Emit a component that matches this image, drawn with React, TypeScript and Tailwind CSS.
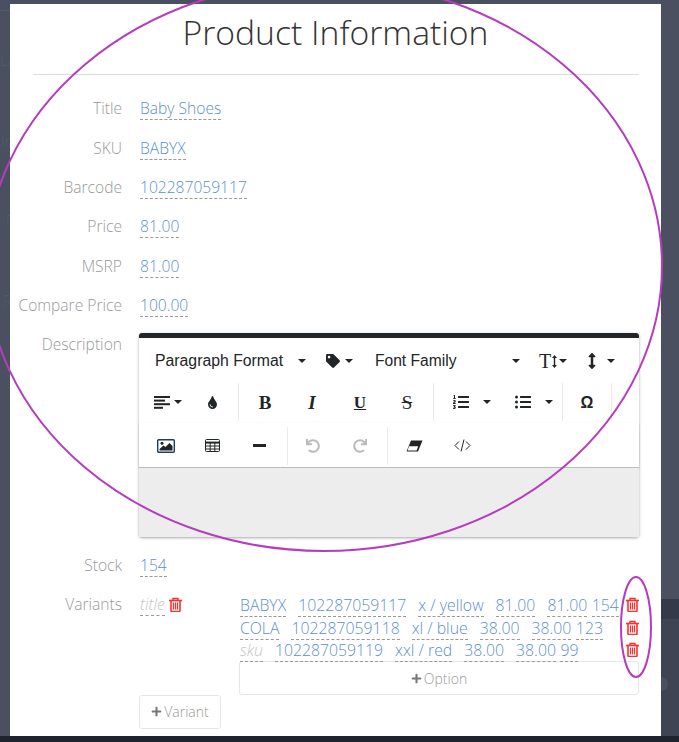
import React from "react";
import { FaTag, FaTint, FaUndo, FaRedo, FaListUl, FaListOl, FaPlus, FaArrowsAltV } from "react-icons/fa";

const sans = "font-['Open_Sans',sans-serif]";

function Caret() {
  return <span className="inline-block w-0 h-0 border-x-[4.5px] border-x-transparent border-t-[4.5px] border-t-[#222527] shrink-0" />;
}

function Editable({ children, empty }: { children: React.ReactNode; empty?: boolean }) {
  return (
    <span className={`border-b border-dashed border-[#999] leading-[21px] inline-block h-[22px] whitespace-nowrap ${empty ? "italic text-[#c4c4c4]" : "text-[#5b90d0]"}`}>
      {children}
    </span>
  );
}

function Row({ label, children, h = "h-[39.3px]" }: { label: string; children: React.ReactNode; h?: string }) {
  return (
    <div className={`flex ${h}`}>
      <div className="w-[112px] shrink-0 text-right text-[#999] leading-[21px] whitespace-nowrap">{label}</div>
      <div className="ml-[18px] leading-[21px]">{children}</div>
    </div>
  );
}

function Trash() {
  return (
    <svg width="13" height="15" viewBox="0 0 13 15" className="shrink-0 block" fill="none" stroke="#ff2d2d">
      <path d="M4 3V1.5h5V3" strokeWidth="1.4" />
      <path d="M0 3.5h13" strokeWidth="1.6" />
      <path d="M2 4v9.5a1 1 0 0 0 1 1h7a1 1 0 0 0 1-1V4" strokeWidth="1.6" />
      <path d="M4.5 5.5v7M6.5 5.5v7M8.5 5.5v7" strokeWidth="1.2" />
    </svg>
  );
}

function Tool({ children, w }: { children: React.ReactNode; w: string }) {
  return <div className={`${w} h-[38px] flex items-center justify-center text-[#222527] shrink-0`}>{children}</div>;
}

function Sep({ className = "" }: { className?: string }) {
  return <div className={`w-px h-[38px] bg-[#ebebeb] shrink-0 ${className}`} />;
}

function VariantRow({ cells }: { cells: (string | [string, boolean])[] }) {
  return (
    <div className="flex items-start h-[22.4px] text-[15.8px]">
      {cells.map((c, i) => {
        const text = Array.isArray(c) ? c[0] : c;
        const empty = Array.isArray(c) ? c[1] : false;
        return (
          <span key={i} className={i === 0 ? "" : i === cells.length - 1 ? "ml-[4.5px]" : "ml-[12px]"}>
            <Editable empty={empty}>{text}</Editable>
          </span>
        );
      })}
    </div>
  );
}

export default function App() {
  return (
    <div className={`relative w-[679px] h-[742px] overflow-hidden bg-[#4b5060] ${sans} font-light text-[15.6px]`}>
      <div className="absolute left-[661px] top-[599px] w-[18px] h-[20px] bg-[#343a4a]" />
      <div className="absolute left-[661px] top-[619px] w-[18px] h-[117px] bg-[#3f4454]" />
      <div className="absolute left-[661px] top-[677px] w-[7px] h-[14px] rounded-r-full bg-[#4b5060]" />
      <div className="absolute left-0 top-[736px] w-full h-[6px] bg-[#1f232d]" />
      <div className="absolute left-0 top-[10px] w-[10px] h-px bg-[#555a69]" />
      <div className="absolute left-0 top-[48px] text-[#555a69] text-[15px] leading-[24px]">La</div>
      <div className="absolute left-[1px] top-[128px] text-[#555a69] text-[15px] leading-[24px]">In</div>
      <div className="absolute left-[6px] top-[208px] text-[#555a69] text-[15px] leading-[24px]">P</div>
      <div className="absolute left-[3px] top-[288px] text-[#555a69] text-[15px] leading-[24px]">R</div>

      <div className="relative ml-[10px] mt-[4px] pt-[4px] w-[651px] h-[732px] bg-white">
        <h1 className="text-center text-[33.7px] leading-[50px] mt-[-1px] text-[#333]">Product Information</h1>
        <div className="mt-[17px] mx-[23px] h-px w-[606px] bg-[#ddd]" />
        <div className="mt-[23.4px]">
          <Row label="Title"><Editable>Baby Shoes</Editable></Row>
          <Row label="SKU"><Editable>BABYX</Editable></Row>
          <Row label="Barcode"><Editable>102287059117</Editable></Row>
          <Row label="Price"><Editable>81.00</Editable></Row>
          <Row label="MSRP"><Editable>81.00</Editable></Row>
          <Row label="Compare Price"><Editable>100.00</Editable></Row>
          <Row label="Description" h="h-[221px]">
            <div className="w-[500px] ml-[-1px] mt-[-1px] rounded-[3px] shadow-[0_1px_3px_rgba(0,0,0,0.35)] border-t-[5px] border-[#222527] font-['Liberation_Sans',sans-serif] font-normal text-[#222527]">
              <div className="flex items-center h-[43px] pt-[3px] pl-[16px] bg-white">
                <span className="w-[128px] text-[15.8px] leading-none whitespace-nowrap">Paragraph Format</span>
                <span className="ml-[15px] flex"><Caret /></span>
                <span className="ml-[20px] flex items-center gap-[5px]"><FaTag className="text-[14px]" /><Caret /></span>
                <span className="ml-[22px] w-[137px] text-[15.6px] leading-none whitespace-nowrap">Font Family</span>
                <span className="flex"><Caret /></span>
                <span className="ml-[19px] w-[20px] flex items-center font-['Liberation_Serif',serif] text-[20px] leading-none">
                  T
                  <svg width="5" height="13" viewBox="0 0 5 13" fill="#222527" className="ml-[1px]"><path d="M2.5 0 5 3H3.2v7H5l-2.5 3L0 10h1.8V3H0z" /></svg>
                </span>
                <span className="flex"><Caret /></span>
                <span className="ml-[20px] flex items-center gap-[10px]"><FaArrowsAltV className="text-[16px] w-[10px]" /><Caret /></span>
              </div>
              <div className="flex items-center h-[42px] bg-white">
                <Tool w="w-[57px]">
                  <svg width="16" height="13" viewBox="0 0 16 13" fill="#222527" className="mr-[4px]">
                    <rect y="0" width="16" height="2" /><rect y="3.6" width="11" height="2" /><rect y="7.2" width="16" height="2" /><rect y="10.8" width="9" height="2" />
                  </svg>
                  <Caret />
                </Tool>
                <Tool w="w-[32px]"><FaTint className="text-[13px]" /></Tool>
                <Sep className="ml-[10px]" />
                <Tool w="w-[52px]"><span className="font-['Liberation_Serif',serif] font-bold text-[19px]">B</span></Tool>
                <Tool w="w-[42px]"><span className="font-['Liberation_Serif',serif] italic font-bold text-[19px]">I</span></Tool>
                <Tool w="w-[54px]"><span className="font-['Liberation_Serif',serif] font-bold underline text-[17px]">U</span></Tool>
                <Tool w="w-[40px]"><span className="font-['Liberation_Serif',serif] line-through text-[19px]">S</span></Tool>
                <Sep className="ml-[6px]" />
                <Tool w="w-[75px]"><FaListOl className="text-[16px]" /><span className="ml-[14px] flex"><Caret /></span></Tool>
                <Tool w="w-[49px]"><FaListUl className="text-[16px]" /><span className="ml-[14px] flex"><Caret /></span></Tool>
                <Sep className="ml-[4px]" />
                <Tool w="w-[48px]"><span className="font-bold text-[16px]">Ω</span></Tool>
                <Sep />
              </div>
              <div className="flex items-center h-[45px] pt-[1px] bg-white border-b border-[#bbb] shadow-[0_1px_2px_rgba(0,0,0,0.2)]">
                <Tool w="w-[54px]">
                  <svg width="18" height="14" viewBox="0 0 18 14" fill="none">
                    <rect x="0.7" y="0.7" width="16.6" height="12.6" rx="1" stroke="#1b3f63" strokeWidth="1.4" />
                    <path d="M2.5 11.5V10l4-3.5 2 1.5 4-4 3 3v4.5z" fill="#222527" />
                    <circle cx="5" cy="4.2" r="1.5" fill="#222527" />
                  </svg>
                </Tool>
                <Tool w="w-[39px]">
                  <svg width="15" height="13" viewBox="0 0 15 13" fill="none" stroke="#222527">
                    <rect x="0.5" y="0.5" width="14" height="12" rx="1" />
                    <path d="M0.5 3.6h14" strokeWidth="2" />
                    <path d="M0.5 7h14M0.5 10h14M5.2 3v9.5M9.8 3v9.5" />
                  </svg>
                </Tool>
                <Tool w="w-[55px]"><div className="w-[13px] h-[3px] bg-[#222527]" /></Tool>
                <Sep />
                <Tool w="w-[50px]"><FaUndo className="text-[14px] text-[#bbb]" /></Tool>
                <Tool w="w-[44px]"><FaRedo className="text-[14px] text-[#bbb]" /></Tool>
                <Sep className="ml-[5px]" />
                <Tool w="w-[52px]">
                  <svg width="17" height="12" viewBox="0 0 17 12">
                    <path d="M5 0.5h11.5L12 11.5H0.5z" fill="#222527" />
                    <path d="M3 6.2h9.2L10.6 10.4H1.6z" fill="#fff" />
                  </svg>
                </Tool>
                <Tool w="w-[44px]">
                  <svg width="17" height="13" viewBox="0 0 17 13" fill="none" stroke="#222527" strokeWidth="1">
                    <path d="M5 2.5 1 6.5l4 4M12 2.5l4 4-4 4M10 0.5 7 12.5" />
                  </svg>
                </Tool>
              </div>
              <div className="h-[69px] bg-[#ededed]" />
            </div>
          </Row>
          <Row label="Stock" h="h-[39px]"><Editable>154</Editable></Row>
          <div className="flex">
            <div className="w-[112px] shrink-0 text-right text-[#999] leading-[21px]">Variants</div>
            <div className="ml-[18px]">
              <div className="flex">
                <div className="w-[100px] flex items-start gap-[4px]">
                  <Editable empty>title</Editable>
                  <span className="mt-[3px]"><Trash /></span>
                </div>
                <div className="w-[385px]">
                  <div className="relative">
                    <VariantRow cells={["BABYX", "102287059117", "x / yellow", "81.00", "81.00", "154"]} />
                    <VariantRow cells={["COLA", "102287059118", "xl / blue", "38.00", "38.00", "123"]} />
                    <VariantRow cells={[["sku", true], "102287059119", "xxl / red", "38.00", "38.00", "99"]} />
                    <div className="absolute left-[386px] top-[3px] flex flex-col gap-[7.4px]"><Trash /><Trash /><Trash /></div>
                  </div>
                  <div className="ml-[-1px] h-[34px] w-[400px] border border-[#e6e6e6] rounded-[3px] flex items-center justify-center text-[14px] text-[#999]">
                    <FaPlus className="text-[11px] text-[#777] mr-[2px]" />Option
                  </div>
                </div>
              </div>
              <div className="ml-[-1px] w-[82px] h-[34px] pb-[2px] border border-[#e6e6e6] rounded-[3px] flex items-center justify-center text-[14px] text-[#999]">
                <FaPlus className="text-[11px] text-[#777] mr-[2px]" />Variant
              </div>
            </div>
          </div>
        </div>
      </div>

      <svg className="absolute inset-0 pointer-events-none" width="679" height="742" fill="none" stroke="#b63cbf" strokeWidth="2">
        <ellipse cx="324" cy="266" rx="338" ry="285" />
        <ellipse cx="636" cy="627" rx="15" ry="50" />
      </svg>
    </div>
  );
}
